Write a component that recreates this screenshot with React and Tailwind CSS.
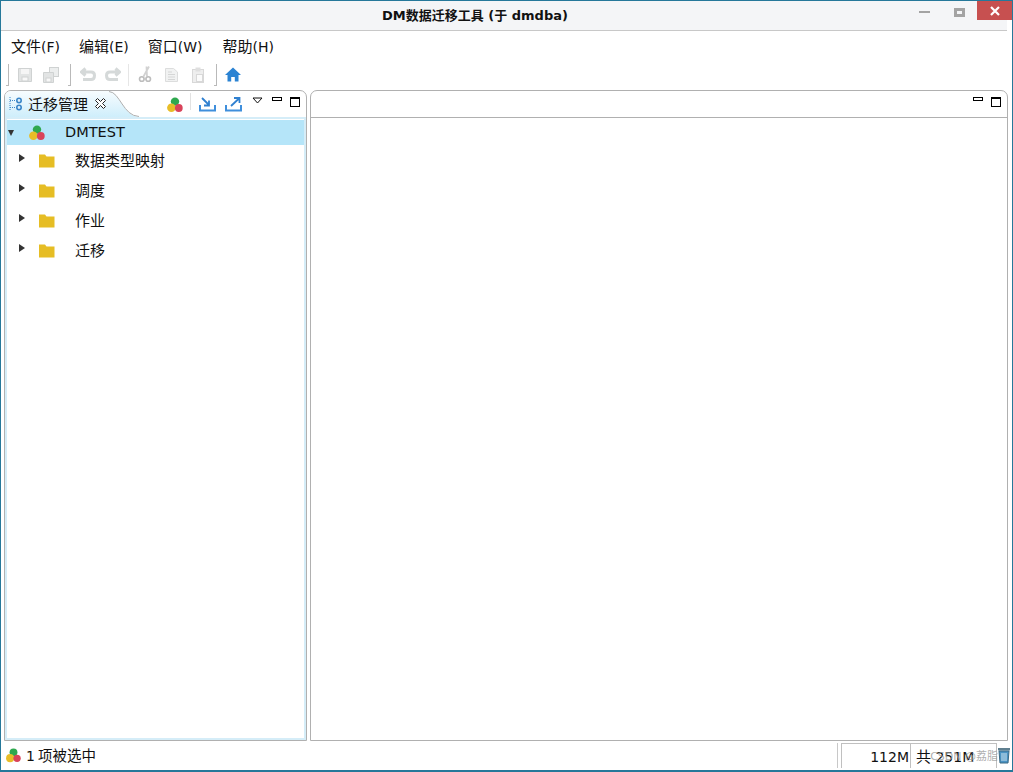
import React from "react";

const FONT = "[font-family:'DejaVu_Sans','Noto_Sans_CJK_SC',sans-serif]";

function Logo({ className = "" }) {
  return (
    <svg viewBox="0 0 16 16" className={className}>
      <circle cx="8" cy="4.6" r="4.2" fill="#2fa84f" />
      <circle cx="4.4" cy="10.8" r="4.3" fill="#e8bd28" />
      <circle cx="11.8" cy="11" r="3.9" fill="#d9435a" />
    </svg>
  );
}

function Folder() {
  return (
    <svg width="16" height="14" viewBox="0 0 16 14">
      <path d="M0 0.5 H6 L7.5 2.5 H15.5 V13.5 H0 Z" fill="#e6bd24" />
    </svg>
  );
}

function Sep() {
  return <div className="w-[3px] h-[22px] border-r border-b border-[#b9b9b9] shrink-0" />;
}

function MinMax() {
  return (
    <div className="flex items-start gap-[8px] pt-[6px]">
      <div className="w-[10px] h-[4px] border border-black" />
      <div className="w-[10px] h-[10px] border border-black border-t-2" />
    </div>
  );
}

function TreeRow({ label }) {
  return (
    <div className="h-[30px] flex items-center text-[15px] text-[#111]">
      <span className="w-0 h-0 ml-[12px] border-y-[4px] border-y-transparent border-l-[6px] border-l-[#333] mb-[7px]" />
      <span className="ml-[14px] mb-[1px] flex"><Folder /></span>
      <span className="ml-[20px]">{label}</span>
    </div>
  );
}

function MenuItem({ cjk, tail, className = "" }) {
  return (
    <span className={`text-[14px] ${className}`}>
      <span className="text-[15px]">{cjk}</span>
      {tail}
    </span>
  );
}

export default function App() {
  return (
    <div className={`w-[1013px] h-[772px] flex flex-col bg-white border-x border-t border-b-2 border-[#25789a] overflow-hidden ${FONT}`}>
      {/* title bar */}
      <div className="h-[30px] shrink-0 bg-[#f4f5f7] border-b border-[#c8c8c8] mr-[5px] flex items-center relative">
        <div className="flex-1 text-center font-bold text-[13px] text-[#111] pr-[58px]">DM数据迁移工具 (于 dmdba)</div>
        <div className="absolute right-[42px] top-[7px] w-[11px] h-[9px] border-[3px] border-[#a3a3a3]" />
        <div className="absolute right-[77px] top-[10px] w-[11px] h-[2px] bg-[#a3a3a3]" />
        <div className="absolute -right-[5px] top-0 w-[35px] h-[19px] bg-[#c75050] flex items-center justify-center">
          <svg width="10" height="10" viewBox="0 0 10 10"><path d="M1 1 L9 9 M9 1 L1 9" stroke="#fff" strokeWidth="2.2" /></svg>
        </div>
      </div>

      {/* menu */}
      <div className="h-[31px] shrink-0 flex items-center text-[#111] pl-[10px] pt-[1px] gap-[19px]">
        <MenuItem cjk="文件" tail="(F)" />
        <MenuItem cjk="编辑" tail="(E)" />
        <MenuItem cjk="窗口" tail="(W)" />
        <MenuItem cjk="帮助" tail="(H)" className="ml-[1px]" />
      </div>

      {/* toolbar */}
      <div className="h-[25px] shrink-0 flex items-center pl-[5px]">
        <Sep />
        <svg className="ml-[8px]" width="16" height="17" viewBox="0 0 16 17">
          <path d="M1.5 2.5 H14.5 V15.5 H1.5 Z" fill="#e2e4e4" stroke="#cfd2d2" />
          <rect x="4" y="3" width="8" height="5" fill="#f5f5f5" />
          <rect x="5" y="11" width="6" height="4" fill="#f8f8f8" stroke="#cfd2d2" />
        </svg>
        <svg className="ml-[9px]" width="18" height="18" viewBox="0 0 18 18">
          <rect x="7.5" y="1.5" width="9" height="9" fill="#eceeee" stroke="#cfd2d2" />
          <path d="M1.5 6.5 H11.5 V16.5 H1.5 Z" fill="#e2e4e4" stroke="#cfd2d2" />
          <rect x="4" y="12" width="5" height="4" fill="#f8f8f8" stroke="#cfd2d2" />
        </svg>
        <div className="ml-[8px]"><Sep /></div>
        <svg className="ml-[9px]" width="16" height="15" viewBox="0 0 16 15">
          <path d="M5.5 1.5 L1.5 5 L5.5 8.5 M2 5 H11 Q14.5 5 14.5 8.5 Q14.5 12.5 11 12.5 H3" fill="none" stroke="#d5d9d9" strokeWidth="3" />
        </svg>
        <svg className="ml-[9px]" width="16" height="15" viewBox="0 0 16 15">
          <path d="M10.5 1.5 L14.5 5 L10.5 8.5 M14 5 H5 Q1.5 5 1.5 8.5 Q1.5 12.5 5 12.5 H13" fill="none" stroke="#d5d9d9" strokeWidth="3" />
        </svg>
        <div className="w-px h-[22px] bg-[#e6e6e6] ml-[7px]" />
        <svg className="ml-[9px]" width="14" height="17" viewBox="0 0 14 17">
          <path d="M11 0.5 L5.5 10.5 M8.5 0.5 L9 10.5" stroke="#d2d2d2" strokeWidth="1.8" fill="none" />
          <circle cx="3.8" cy="13" r="2.3" fill="none" stroke="#bdbdbd" strokeWidth="1.6" />
          <circle cx="10.2" cy="13" r="2.3" fill="none" stroke="#bdbdbd" strokeWidth="1.6" />
        </svg>
        <svg className="ml-[12px]" width="15" height="16" viewBox="0 0 15 16">
          <path d="M1.5 1.5 H9.5 L13.5 5 V14.5 H1.5 Z" fill="#f1f2f2" stroke="#dcdddd" />
          <path d="M4 5 H8 M4 7.5 H11 M4 10 H11 M4 12.5 H11" stroke="#d5d6d6" />
        </svg>
        <svg className="ml-[12px]" width="14" height="16" viewBox="0 0 14 16">
          <rect x="1.5" y="2.5" width="11" height="13" fill="#eeeeee" stroke="#d8d8d8" />
          <rect x="4.5" y="0.5" width="5" height="4" fill="#dfdfdf" />
          <rect x="5.5" y="7.5" width="6" height="7" fill="#fbfbfb" stroke="#d8d8d8" />
        </svg>
        <div className="ml-[9px]"><Sep /></div>
        <svg className="ml-[8px]" width="16" height="15" viewBox="0 0 16 15">
          <path d="M8 0.5 L16 8 H13.5 V14.5 H9.8 V10 H6.2 V14.5 H2.5 V8 H0 Z" fill="#2b83d3" />
        </svg>
      </div>

      {/* panels */}
      <div className="flex-1 min-h-0 flex mt-[3px] pl-[3px] pr-[4px] gap-[3px]">
        {/* left */}
        <div className="w-[303px] shrink-0 flex flex-col border border-[#b0b0b0] rounded-t-[7px] relative">
          <div className="h-[26px] shrink-0 flex items-center relative">
            <svg className="absolute left-0 top-0" width="135" height="26" viewBox="0 0 135 26">
              <defs>
                <linearGradient id="tabbg" x1="0" y1="0" x2="0" y2="1">
                  <stop offset="0" stopColor="#f7fcfe" />
                  <stop offset="1" stopColor="#cfeefb" />
                </linearGradient>
              </defs>
              <path d="M0 6 Q0 0 7 0 H104 C115 1 118 25 134 26 L0 26 Z" fill="url(#tabbg)" />
              <path d="M104 0.5 C115 1 118 25 134 25.5" fill="none" stroke="#b0b0b0" />
            </svg>
            <div className="relative flex items-center h-full">
              <svg className="ml-[4px]" width="14" height="16" viewBox="0 0 14 16">
                <path d="M1 1 V14 M1 4.5 H6 M1 11.5 H6" stroke="#3a86c8" strokeDasharray="1 1" fill="none" />
                <circle cx="10" cy="4.5" r="2.2" fill="#dff0fa" stroke="#3a86c8" strokeWidth="1.6" />
                <circle cx="10" cy="11.5" r="2.2" fill="#dff0fa" stroke="#3a86c8" strokeWidth="1.6" />
              </svg>
              <span className="ml-[5px] mt-[2px] text-[15px] text-[#111]">迁移管理</span>
              <svg className="ml-[7px] mb-[1px]" width="11" height="11" viewBox="0 0 11 11">
                <path d="M0.5 2.5 L2.5 0.5 L5.5 3.5 L8.5 0.5 L10.5 2.5 L7.5 5.5 L10.5 8.5 L8.5 10.5 L5.5 7.5 L2.5 10.5 L0.5 8.5 L3.5 5.5 Z" fill="#fff" stroke="#222" strokeWidth="1" />
              </svg>
            </div>
            <div className="ml-auto flex items-start h-full pr-[6px]">
              <Logo className="w-[16px] h-[16px] mt-[6px]" />
              <div className="w-px h-[17px] bg-[#e2e2e2] mt-[2px] ml-[7px]" />
              <svg className="ml-[8px] mt-[6px]" width="17" height="15" viewBox="0 0 17 15">
                <path d="M1 8 V13.5 H16 V8" fill="none" stroke="#3f8fdc" strokeWidth="2" />
                <path d="M3 1 L10 8 M10 3.5 V8.5 H5" fill="none" stroke="#2f80d0" strokeWidth="1.8" />
              </svg>
              <svg className="ml-[9px] mt-[6px]" width="17" height="15" viewBox="0 0 17 15">
                <path d="M1 8 V13.5 H16 V8" fill="none" stroke="#3f8fdc" strokeWidth="2" />
                <path d="M6 9 L14 1.5 M9 1 H14.5 V6" fill="none" stroke="#2f80d0" strokeWidth="1.8" />
              </svg>
              <svg className="ml-[10px] mt-[6px]" width="11" height="7" viewBox="0 0 11 7">
                <path d="M1 1 H10 L5.5 6 Z" fill="#fff" stroke="#111" />
              </svg>
              <div className="ml-[9px]"><MinMax /></div>
            </div>
          </div>
          <div className="flex-1 min-h-0 border-2 border-[#d5edf8] pt-[1px] flex flex-col">
            <div className="h-[25px] shrink-0 bg-[#b5e5f9] flex items-center text-[14.5px] text-[#111]">
              <span className="w-0 h-0 ml-[1px] border-x-[3.5px] border-x-transparent border-t-[6px] border-t-[#333]" />
              <Logo className="w-[16px] h-[16px] ml-[15px]" />
              <span className="ml-[20px]">DMTEST</span>
            </div>
            <div className="h-px shrink-0" />
            <TreeRow label="数据类型映射" />
            <TreeRow label="调度" />
            <TreeRow label="作业" />
            <TreeRow label="迁移" />
          </div>
        </div>
        {/* right */}
        <div className="flex-1 flex flex-col border border-[#b0b0b0] rounded-t-[7px]">
          <div className="h-[27px] shrink-0 border-b border-[#b0b0b0] flex justify-end pr-[6px]">
            <MinMax />
          </div>
          <div className="flex-1" />
        </div>
      </div>

      {/* status */}
      <div className="h-[29px] shrink-0 flex items-center text-[14px] text-[#111] relative pt-[2px]">
        <Logo className="w-[15px] h-[15px] ml-[5px] mb-[3px]" />
        <span className="ml-[5px]">1</span>
        <span className="ml-[3px] text-[14.5px]">项被选中</span>
        <div className="ml-auto flex items-stretch h-[25px] mb-[2px]">
          <div className="w-[1px] bg-[#c8c8c8] mr-[3px]" />
          <div className="w-[69px] border-l border-[#c0c0c0] border-t text-right pr-px leading-[26px]">112M</div>
          <div className="w-[87px] border-l border-r border-[#c0c0c0] border-t pl-[5px] leading-[26px] whitespace-nowrap">
            <span className="text-[15px]">共</span> 251M
          </div>
          <div className="w-[15px] flex items-center">
            <svg width="14" height="17" viewBox="0 0 14 17">
              <rect x="1" y="1" width="12" height="2.5" fill="#5f7f8f" />
              <path d="M2 4 H12 L11 16 H3 Z" fill="#4a93c4" stroke="#3b6a85" />
              <path d="M5 6 V14 M7 6 V14 M9 6 V14" stroke="#cfe4ef" />
            </svg>
          </div>
        </div>
        <div className="absolute right-[14px] top-[8px] text-[11px] text-[#9a9a9a]/80 whitespace-nowrap">CSDN @荔脂</div>
      </div>
    </div>
  );
}
